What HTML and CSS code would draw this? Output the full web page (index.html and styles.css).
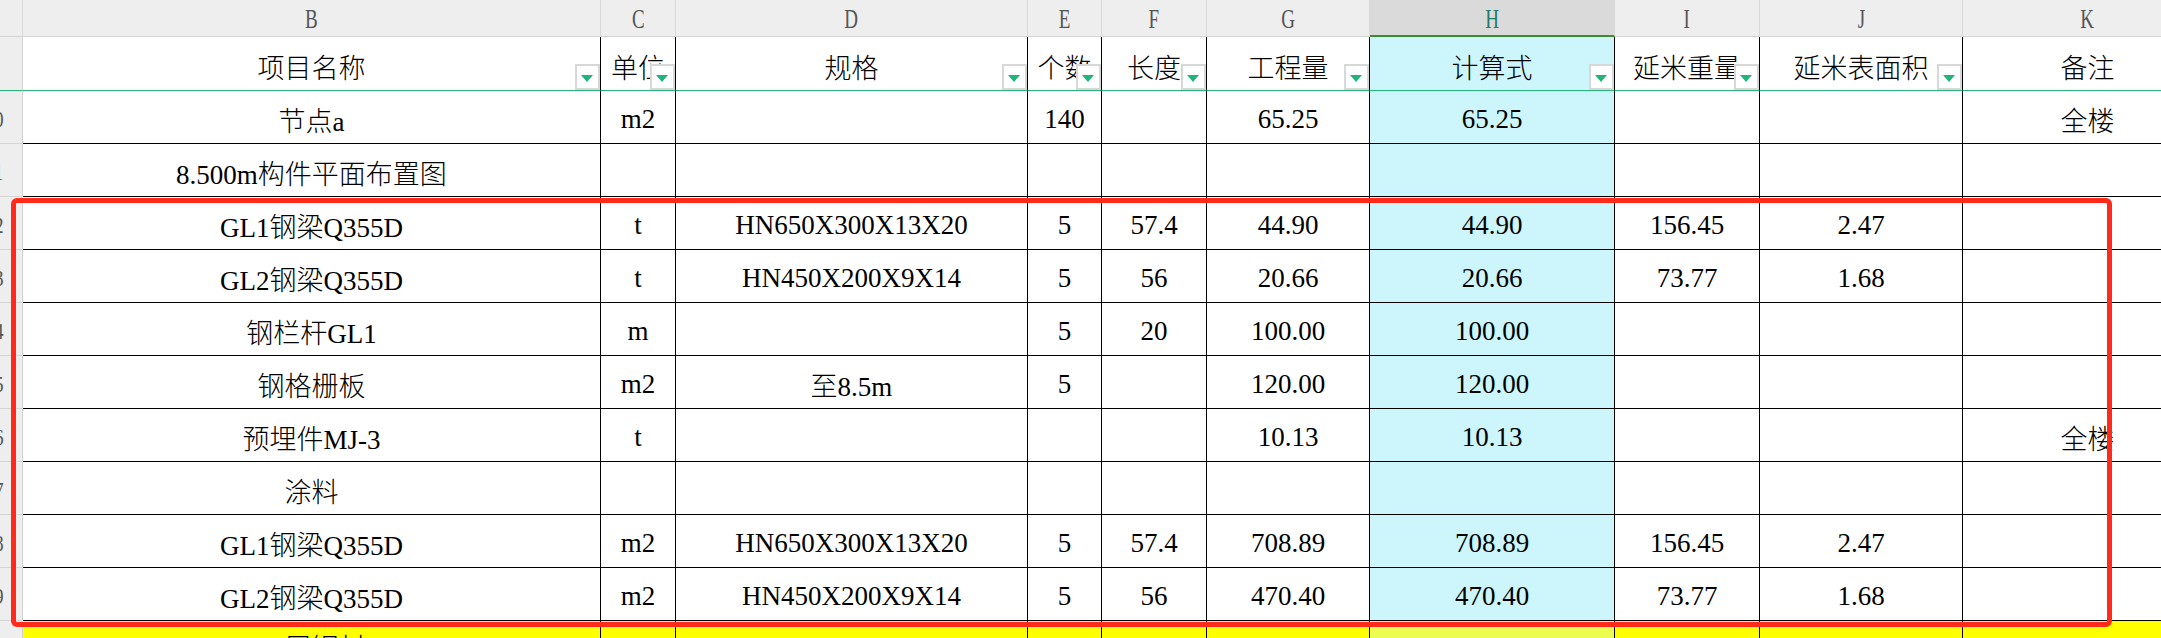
FILE: index.html
```html
<!DOCTYPE html>
<html lang="zh-CN">
<head>
<meta charset="utf-8">
<title>Sheet</title>
<link rel="stylesheet" href="styles.css">
</head>
<body>
<div class="sheet">
  <div class="row colhdr">
    <div class="ch corner"></div>
    <div class="ch"><span class="lt">B</span></div>
    <div class="ch"><span class="lt">C</span></div>
    <div class="ch"><span class="lt">D</span></div>
    <div class="ch"><span class="lt">E</span></div>
    <div class="ch"><span class="lt">F</span></div>
    <div class="ch"><span class="lt">G</span></div>
    <div class="ch sel"><span class="lt">H</span></div>
    <div class="ch"><span class="lt">I</span></div>
    <div class="ch"><span class="lt">J</span></div>
    <div class="ch"><span class="lt">K</span></div>
  </div>

  <div class="row hdr">
    <div class="rh"><span class="rn">9</span></div>
    <div class="c">项目名称<span class="flt"></span></div>
    <div class="c">单位<span class="flt"></span></div>
    <div class="c">规格<span class="flt"></span></div>
    <div class="c">个数<span class="flt"></span></div>
    <div class="c">长度<span class="flt"></span></div>
    <div class="c">工程量<span class="flt"></span></div>
    <div class="c h">计算式<span class="flt"></span></div>
    <div class="c">延米重量<span class="flt"></span></div>
    <div class="c">延米表面积<span class="flt"></span></div>
    <div class="c">备注</div>
  </div>

  <div class="row">
    <div class="rh"><span class="rn">10</span></div>
    <div class="c">节点a</div><div class="c">m2</div><div class="c"></div><div class="c">140</div><div class="c"></div>
    <div class="c">65.25</div><div class="c h">65.25</div><div class="c"></div><div class="c"></div><div class="c">全楼</div>
  </div>
  <div class="row">
    <div class="rh"><span class="rn">11</span></div>
    <div class="c">8.500m构件平面布置图</div><div class="c"></div><div class="c"></div><div class="c"></div><div class="c"></div>
    <div class="c"></div><div class="c h"></div><div class="c"></div><div class="c"></div><div class="c"></div>
  </div>
  <div class="row">
    <div class="rh"><span class="rn">12</span></div>
    <div class="c">GL1钢梁Q355D</div><div class="c">t</div><div class="c">HN650X300X13X20</div><div class="c">5</div><div class="c">57.4</div>
    <div class="c">44.90</div><div class="c h">44.90</div><div class="c">156.45</div><div class="c">2.47</div><div class="c"></div>
  </div>
  <div class="row">
    <div class="rh"><span class="rn">13</span></div>
    <div class="c">GL2钢梁Q355D</div><div class="c">t</div><div class="c">HN450X200X9X14</div><div class="c">5</div><div class="c">56</div>
    <div class="c">20.66</div><div class="c h">20.66</div><div class="c">73.77</div><div class="c">1.68</div><div class="c"></div>
  </div>
  <div class="row">
    <div class="rh"><span class="rn">14</span></div>
    <div class="c">钢栏杆GL1</div><div class="c">m</div><div class="c"></div><div class="c">5</div><div class="c">20</div>
    <div class="c">100.00</div><div class="c h">100.00</div><div class="c"></div><div class="c"></div><div class="c"></div>
  </div>
  <div class="row">
    <div class="rh"><span class="rn">15</span></div>
    <div class="c">钢格栅板</div><div class="c">m2</div><div class="c">至8.5m</div><div class="c">5</div><div class="c"></div>
    <div class="c">120.00</div><div class="c h">120.00</div><div class="c"></div><div class="c"></div><div class="c"></div>
  </div>
  <div class="row">
    <div class="rh"><span class="rn">16</span></div>
    <div class="c">预埋件MJ-3</div><div class="c">t</div><div class="c"></div><div class="c"></div><div class="c"></div>
    <div class="c">10.13</div><div class="c h">10.13</div><div class="c"></div><div class="c"></div><div class="c">全楼</div>
  </div>
  <div class="row">
    <div class="rh"><span class="rn">17</span></div>
    <div class="c">涂料</div><div class="c"></div><div class="c"></div><div class="c"></div><div class="c"></div>
    <div class="c"></div><div class="c h"></div><div class="c"></div><div class="c"></div><div class="c"></div>
  </div>
  <div class="row">
    <div class="rh"><span class="rn">18</span></div>
    <div class="c">GL1钢梁Q355D</div><div class="c">m2</div><div class="c">HN650X300X13X20</div><div class="c">5</div><div class="c">57.4</div>
    <div class="c">708.89</div><div class="c h">708.89</div><div class="c">156.45</div><div class="c">2.47</div><div class="c"></div>
  </div>
  <div class="row">
    <div class="rh"><span class="rn">19</span></div>
    <div class="c">GL2钢梁Q355D</div><div class="c">m2</div><div class="c">HN450X200X9X14</div><div class="c">5</div><div class="c">56</div>
    <div class="c">470.40</div><div class="c h">470.40</div><div class="c">73.77</div><div class="c">1.68</div><div class="c"></div>
  </div>
  <div class="row yel">
    <div class="rh"><span class="rn">20</span></div>
    <div class="c">一层钢材</div><div class="c"></div><div class="c"></div><div class="c"></div><div class="c"></div>
    <div class="c"></div><div class="c h"></div><div class="c"></div><div class="c"></div><div class="c"></div>
  </div>

  <div class="annot"></div>
</div>
</body>
</html>
```

FILE: styles.css
```css
* { box-sizing: border-box; }
html, body {
  margin: 0;
  padding: 0;
  background: #ffffff;
  overflow: hidden;
}
.sheet {
  position: relative;
  width: 2161px;
  height: 638px;
  overflow: hidden;
  display: flex;
  flex-direction: column;
  font-family: "Liberation Serif", "Noto Sans CJK SC", serif;
  font-size: 27px;
  font-weight: 300;
  color: #000;
}
.row {
  display: grid;
  grid-template-columns: 23px 578px 75px 352px 74px 105px 163px 245px 145px 203px 250px;
  height: 53px;
  flex: none;
}
.colhdr { height: 37px; }
.hdr { height: 54px; }

/* column header */
.ch {
  background: #eeeeee;
  border-right: 1px solid #d9d9d9;
  border-bottom: 1px solid #d4d4d4;
  display: flex;
  align-items: center;
  justify-content: center;
  color: #555555;
}
.ch.sel {
  background: #dadada;
  border-bottom: 2px solid #3d8c30;
  color: #1f7a6a;
}
.lt {
  display: inline-block;
  font-family: "Liberation Serif", serif;
  font-size: 28px;
  transform: scaleX(0.68);
  padding-top: 2px;
}

/* row header */
.rh {
  background: #eeeeee;
  border-right: 1px solid #d4d4d4;
  border-bottom: 1px solid #d4d4d4;
  overflow: hidden;
  display: flex;
  align-items: center;
  color: #555555;
}
.rn {
  flex: none;
  width: 56px;
  margin-left: -34px;
  text-align: center;
  font-size: 24px;
  display: inline-block;
  transform: scaleX(0.8);
  padding-top: 4px;
}

/* cells */
.c {
  position: relative;
  border-right: 1px solid #000;
  border-bottom: 1px solid #000;
  display: flex;
  align-items: center;
  justify-content: center;
  white-space: nowrap;
  padding-top: 5px;
  background: #ffffff;
}
.c.h { background: #ccf5fc; }

.hdr .rh { border-bottom: 1px solid #25b57a; }
.hdr .c { border-bottom: 1px solid #25b57a; }

.yel .c {
  background: #ffff00;
  border-bottom: none;
  align-items: flex-start;
  padding-top: 6px;
}
.yel .c.h { background: #ecfc50; }

/* filter dropdown */
.flt {
  position: absolute;
  right: 0;
  bottom: 0;
  width: 25px;
  height: 26px;
  background: #ffffff;
  border: 2px solid #d8d8d8;
}
.flt::after {
  content: "";
  position: absolute;
  left: 4px;
  top: 9px;
  border-left: 6.5px solid transparent;
  border-right: 6.5px solid transparent;
  border-top: 7px solid #1fb57a;
}

/* red annotation box */
.annot {
  position: absolute;
  left: 11px;
  top: 198px;
  width: 2101px;
  height: 429px;
  border: 5px solid #ff2a1a;
  border-radius: 6px;
  pointer-events: none;
}
```
